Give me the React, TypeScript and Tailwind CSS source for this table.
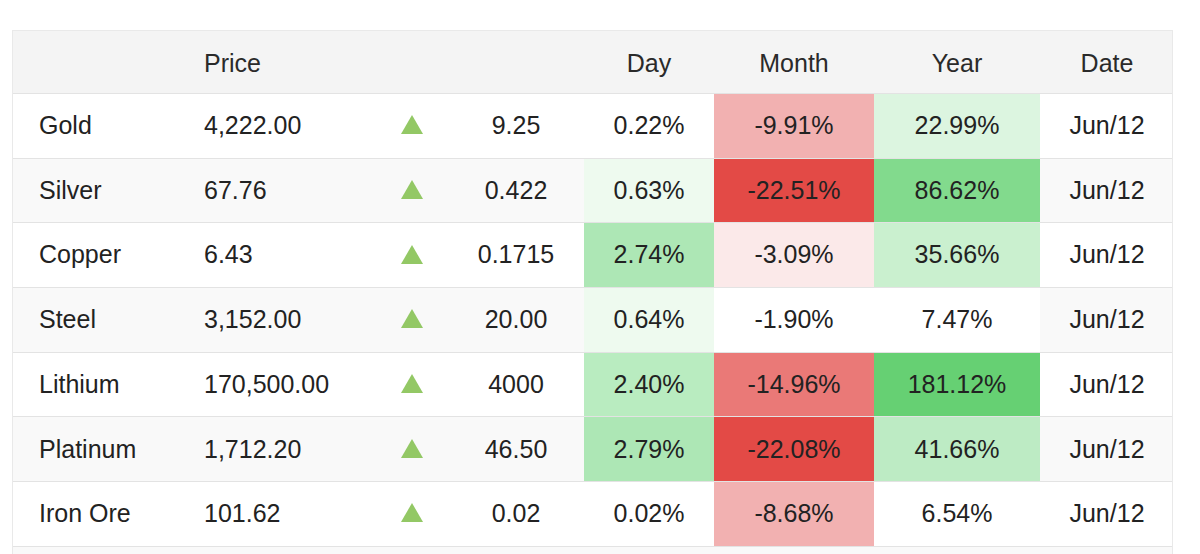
import React from 'react';

type Row = {
  name: string;
  price: string;
  change: string;
  day: string;
  month: string;
  year: string;
  date: string;
  dayBg: string;
  monthBg: string;
  yearBg: string;
};

// cell backgrounds are written out in full so tailwind picks them up
const rows: Row[] = [
  { name: 'Gold', price: '4,222.00', change: '9.25', day: '0.22%', month: '-9.91%', year: '22.99%', date: 'Jun/12', dayBg: '', monthBg: 'bg-[#f2b1b1]', yearBg: 'bg-[#dcf5e0]' },
  { name: 'Silver', price: '67.76', change: '0.422', day: '0.63%', month: '-22.51%', year: '86.62%', date: 'Jun/12', dayBg: 'bg-[#eefaef]', monthBg: 'bg-[#e34a46]', yearBg: 'bg-[#82da8d]' },
  { name: 'Copper', price: '6.43', change: '0.1715', day: '2.74%', month: '-3.09%', year: '35.66%', date: 'Jun/12', dayBg: 'bg-[#ade7b5]', monthBg: 'bg-[#fbe9e9]', yearBg: 'bg-[#caf0cf]' },
  { name: 'Steel', price: '3,152.00', change: '20.00', day: '0.64%', month: '-1.90%', year: '7.47%', date: 'Jun/12', dayBg: 'bg-[#eefaef]', monthBg: 'bg-white', yearBg: 'bg-white' },
  { name: 'Lithium', price: '170,500.00', change: '4000', day: '2.40%', month: '-14.96%', year: '181.12%', date: 'Jun/12', dayBg: 'bg-[#b9ecc0]', monthBg: 'bg-[#ea7977]', yearBg: 'bg-[#66d073]' },
  { name: 'Platinum', price: '1,712.20', change: '46.50', day: '2.79%', month: '-22.08%', year: '41.66%', date: 'Jun/12', dayBg: 'bg-[#ade7b5]', monthBg: 'bg-[#e34a46]', yearBg: 'bg-[#bdebc4]' },
  { name: 'Iron Ore', price: '101.62', change: '0.02', day: '0.02%', month: '-8.68%', year: '6.54%', date: 'Jun/12', dayBg: '', monthBg: 'bg-[#f2b1b1]', yearBg: '' },
];

const cols = 'grid grid-cols-[165px_203px_67px_136px_130px_160px_166px_134px]';

const UpArrow: React.FC = () => (
  <svg width="22" height="19" viewBox="0 0 22 19">
    <polygon points="11,0 22,19 0,19" fill="#93c865" />
  </svg>
);

const App: React.FC = () => {
  return (
    <div className="h-[554px] overflow-hidden bg-white pt-[30px] pl-[12px] text-[25px] text-[#222] font-['Liberation_Sans',Arial,sans-serif]">
      <div className="w-[1161px] border-t border-l border-r border-[#e9e9e9]">
        {/* header */}
        <div className={`${cols} h-[62px] items-center pt-[4px] bg-[#f4f4f4] text-[#2a2a2a]`}>
          <div />
          <div className="pl-[26px]">Price</div>
          <div />
          <div />
          <div className="text-center">Day</div>
          <div className="text-center">Month</div>
          <div className="text-center">Year</div>
          <div className="text-center">Date</div>
        </div>

        {rows.map((r, i) => (
          <div
            key={r.name}
            className={`${cols} h-[64.7px] border-t border-[#e3e3e3] ${i % 2 === 1 ? 'bg-[#f9f9f9]' : 'bg-white'}`}
          >
            <div className="flex items-center pl-[26px]">{r.name}</div>
            <div className="flex items-center pl-[26px]">{r.price}</div>
            <div className="flex items-center justify-center pr-[5px] pb-[2px]">
              <UpArrow />
            </div>
            <div className="flex items-center justify-center">{r.change}</div>
            <div className={`flex items-center justify-center ${r.dayBg}`}>{r.day}</div>
            <div className={`flex items-center justify-center ${r.monthBg}`}>{r.month}</div>
            <div className={`flex items-center justify-center ${r.yearBg}`}>{r.year}</div>
            <div className="flex items-center justify-center">{r.date}</div>
          </div>
        ))}

        {/* next row, cut off by the window */}
        <div className={`${cols} h-[64.7px] border-t border-[#e3e3e3] bg-[#f9f9f9]`} />
      </div>
    </div>
  );
};

export default App;
